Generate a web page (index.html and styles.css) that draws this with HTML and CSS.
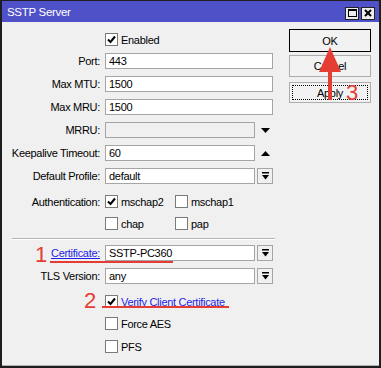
FILE: index.html
```html
<!DOCTYPE html>
<html>
<head>
<meta charset="utf-8">
<link rel="stylesheet" href="styles.css">
</head>
<body>
<div class="window">
  <div class="titlebar">
    <span class="title">SSTP Server</span>
    <div class="tbtns">
      <span class="tbtn"><span class="maxbox"></span></span>
      <span class="tbtn"><svg width="8" height="8" viewBox="0 0 8 8"><path d="M1 1 L7 7 M7 1 L1 7" stroke="#000" stroke-width="2"/></svg></span>
    </div>
  </div>
  <div class="body">
    <div class="form">
      <div class="row cbrow first">
        <span class="lbl"></span>
        <span class="cb"><svg width="11" height="11" viewBox="0 0 11 11"><path d="M2 5.5 L4.5 8 L9 2.5" stroke="#000" stroke-width="2" fill="none"/></svg></span>
        <span class="cbtext">Enabled</span>
      </div>
      <div class="row"><span class="lbl">Port:</span><span class="inp">443</span></div>
      <div class="row"><span class="lbl">Max MTU:</span><span class="inp">1500</span></div>
      <div class="row"><span class="lbl">Max MRU:</span><span class="inp">1500</span></div>
      <div class="row"><span class="lbl">MRRU:</span><span class="inp short dis"></span>
        <span class="arrow"><svg width="9" height="5" viewBox="0 0 9 5"><path d="M0 0 H9 L4.5 5 Z" fill="#000"/></svg></span></div>
      <div class="row"><span class="lbl">Keepalive Timeout:</span><span class="inp short">60</span>
        <span class="arrow"><svg width="9" height="5" viewBox="0 0 9 5"><path d="M0 5 H9 L4.5 0 Z" fill="#000"/></svg></span></div>
      <div class="row"><span class="lbl">Default Profile:</span><span class="inp short">default</span>
        <span class="ddbtn"><svg width="7" height="8" viewBox="0 0 7 8"><rect x="0" y="0" width="7" height="1.5" fill="#000"/><path d="M0 3 H7 L3.5 7.5 Z" fill="#000"/></svg></span></div>
      <div class="row cbrow g11">
        <span class="lbl">Authentication:</span>
        <span class="opt">
          <span class="cb"><svg width="11" height="11" viewBox="0 0 11 11"><path d="M2 5.5 L4.5 8 L9 2.5" stroke="#000" stroke-width="2" fill="none"/></svg></span>
          <span class="cbtext">mschap2</span>
        </span>
        <span class="opt"><span class="cb"></span><span class="cbtext">mschap1</span></span>
      </div>
      <div class="row cbrow g9">
        <span class="lbl"></span>
        <span class="opt"><span class="cb"></span><span class="cbtext">chap</span></span>
        <span class="opt"><span class="cb"></span><span class="cbtext">pap</span></span>
      </div>
      <div class="sep"></div>
      <div class="row g5"><span class="lbl"><span class="link">Certificate:</span></span><span class="inp short">SSTP-PC360</span>
        <span class="ddbtn"><svg width="7" height="8" viewBox="0 0 7 8"><rect x="0" y="0" width="7" height="1.5" fill="#000"/><path d="M0 3 H7 L3.5 7.5 Z" fill="#000"/></svg></span></div>
      <div class="row"><span class="lbl">TLS Version:</span><span class="inp short">any</span>
        <span class="ddbtn"><svg width="7" height="8" viewBox="0 0 7 8"><rect x="0" y="0" width="7" height="1.5" fill="#000"/><path d="M0 3 H7 L3.5 7.5 Z" fill="#000"/></svg></span></div>
      <div class="row cbrow g11">
        <span class="lbl"></span>
        <span class="cb"><svg width="11" height="11" viewBox="0 0 11 11"><path d="M2 5.5 L4.5 8 L9 2.5" stroke="#000" stroke-width="2" fill="none"/></svg></span>
        <span class="cbtext link">Verify Client Certificate</span>
      </div>
      <div class="row cbrow g9">
        <span class="lbl"></span><span class="cb"></span><span class="cbtext">Force AES</span>
      </div>
      <div class="row cbrow g10">
        <span class="lbl"></span><span class="cb"></span><span class="cbtext">PFS</span>
      </div>
    </div>
    <div class="buttons">
      <div class="btn default">OK</div>
      <div class="btn b2">Cancel</div>
      <div class="btn b3 focus">Apply</div>
    </div>
  </div>
  <svg class="annot" width="381" height="368" viewBox="0 0 381 368">
    <polygon points="330,47 341,72 319,72" fill="#e53d33"/>
    <rect x="328" y="71" width="4" height="29" fill="#e53d33"/>
    <rect x="50" y="261" width="123" height="2" fill="#e53d33"/>
    <rect x="102" y="306" width="127" height="2" fill="#e53d33"/>
    <text x="35" y="262" class="num">1</text>
    <text x="84" y="308" class="num">2</text>
    <text x="346" y="100" class="num">3</text>
  </svg>
</div>
</body>
</html>
```

FILE: styles.css
```css
body {
  margin: 0;
  font-family: "Liberation Sans", Arial, sans-serif;
  font-size: 11px;
  letter-spacing: -0.3px;
  color: #000;
  background: #f0f0f0;
}
.window {
  position: relative;
  width: 381px;
  height: 368px;
  box-sizing: border-box;
  border: 2px solid #1e1e1e;
  border-top-width: 1px;
  background: #f0f0f0;
  display: flex;
  flex-direction: column;
}
.titlebar {
  height: 21px;
  flex: none;
  background: #4f51c8;
  display: flex;
  align-items: center;
  padding: 0 4px 0 5px;
  color: #fff;
  font-size: 11.5px;
}
.title { flex: 1; }
.tbtns { display: flex; gap: 2px; margin-top: 3px; }
.tbtn {
  width: 14px;
  height: 13px;
  box-sizing: border-box;
  border: 1px solid #222;
  background: #ececec;
  display: flex;
  align-items: center;
  justify-content: center;
}
.maxbox {
  width: 9px;
  height: 8px;
  box-sizing: border-box;
  border: 1px solid #000;
  border-top-width: 2px;
}
.body {
  flex: 1;
  display: flex;
  border-bottom: 1px solid #b0b0b0;
}
.form {
  width: 283px;
  padding-top: 11px;
  display: flex;
  flex-direction: column;
}
.row {
  display: flex;
  align-items: center;
  height: 16px;
  margin-top: 7px;
}
.row.first { margin-top: 0; }
.cbrow { height: 13px; }
.g11 { margin-top: 11px; }
.g9 { margin-top: 9px; }
.g10 { margin-top: 10px; }
.g5 { margin-top: 5px; }
.lbl {
  width: 103px;
  box-sizing: border-box;
  padding-right: 5px;
  text-align: right;
  flex: none;
  white-space: nowrap;
}
.inp {
  width: 168px;
  height: 16px;
  box-sizing: border-box;
  border: 1px solid #a5a5a5;
  background: #fff;
  padding-left: 3px;
  line-height: 14px;
  flex: none;
}
.inp.short { width: 150px; }
.inp.dis { background: #f0f0f0; }
.ddbtn {
  width: 16px;
  height: 16px;
  margin-left: 2px;
  box-sizing: border-box;
  border: 1px solid #a5a5a5;
  background: #f0f0f0;
  display: flex;
  align-items: center;
  justify-content: center;
}
.arrow {
  width: 16px;
  height: 16px;
  margin-left: 2px;
  display: flex;
  align-items: center;
  justify-content: center;
}
.cb {
  width: 13px;
  height: 13px;
  box-sizing: border-box;
  border: 1px solid #7a7a7a;
  background: #fff;
  margin-right: 3px;
  flex: none;
  display: flex;
  align-items: center;
  justify-content: center;
}
.opt {
  display: flex;
  align-items: center;
  width: 70px;
}
.link {
  color: #1f1fe8;
  text-decoration: underline;
}
.sep {
  margin: 8px 0 0 10px;
  width: 263px;
  height: 0;
  border-top: 1px solid #b4b4b4;
  border-bottom: 1px solid #fff;
}
.buttons {
  padding-top: 7px;
  margin-left: 4px;
  display: flex;
  flex-direction: column;
}
.btn {
  position: relative;
  width: 82px;
  height: 23px;
  box-sizing: border-box;
  border: 1px solid #adadad;
  background: #f2f2f2;
  display: flex;
  align-items: center;
  justify-content: center;
}
.btn.default { border-color: #000; }
.btn.b2 { margin-top: 3px; height: 22px; }
.btn.b3 { margin-top: 5px; height: 21px; }
.btn.focus::after {
  content: "";
  position: absolute;
  inset: 2px;
  border: 1px dotted #000;
}
.annot {
  position: absolute;
  left: -2px;
  top: -1px;
  pointer-events: none;
}
.num {
  font-family: "Liberation Sans", Arial, sans-serif;
  font-size: 22px;
  letter-spacing: 0;
  fill: #e53d33;
}
```
